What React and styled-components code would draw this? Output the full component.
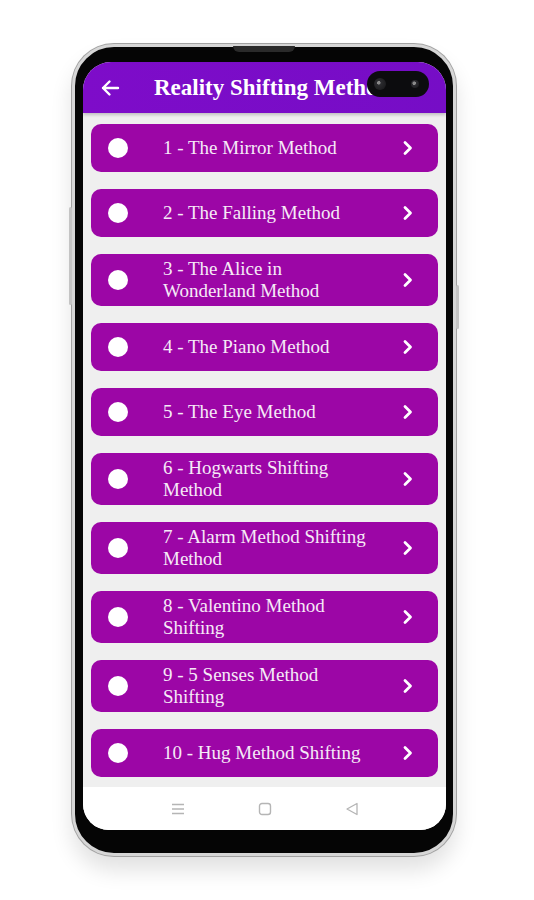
import styled, { createGlobalStyle } from 'styled-components';

const GlobalStyle = createGlobalStyle`
  html, body {
    margin: 0;
    padding: 0;
    background: #ffffff;
  }
  * {
    box-sizing: border-box;
  }
`;

const methods = [
  '1 - The Mirror Method',
  '2 - The Falling Method',
  '3 - The Alice in Wonderland Method',
  '4 - The Piano Method',
  '5 - The Eye Method',
  '6 - Hogwarts Shifting Method',
  '7 - Alarm Method Shifting Method',
  '8 - Valentino Method Shifting',
  '9 - 5 Senses Method Shifting',
  '10 - Hug Method Shifting',
];

const App = () => {
  return (
    <>
      <GlobalStyle />
      <Page>
        <Phone>
          <SideButton $side="left" $top={160} $height={98} />
          <SideButton $side="right" $top={238} $height={44} />
          <Speaker />
          <Camera>
            <Lens />
            <Lens $small />
          </Camera>
          <Screen>
            <AppBar>
              <BackButton>
                <svg width="20" height="18" viewBox="0 0 20 18">
                  <path
                    d="M18 9H3M9.5 2.5L3 9l6.5 6.5"
                    fill="none"
                    stroke="#fff"
                    strokeWidth="2.4"
                    strokeLinecap="round"
                    strokeLinejoin="round"
                  />
                </svg>
              </BackButton>
              <Title>Reality Shifting Methods</Title>
            </AppBar>
            <List>
              {methods.map((m) => (
                <Card key={m}>
                  <Dot />
                  <CardText>{m}</CardText>
                  <Chevron>
                    <svg width="12" height="16" viewBox="0 0 12 16">
                      <path
                        d="M3 2.5L8.5 8 3 13.5"
                        fill="none"
                        stroke="#fff"
                        strokeWidth="2.8"
                        strokeLinecap="round"
                        strokeLinejoin="round"
                      />
                    </svg>
                  </Chevron>
                </Card>
              ))}
            </List>
            <NavBar>
              <svg width="14" height="14" viewBox="0 0 14 14">
                <path d="M1 2.5h12M1 7h12M1 11.5h12" stroke="#b5b5b5" strokeWidth="1.4" />
              </svg>
              <svg width="14" height="14" viewBox="0 0 14 14">
                <rect x="1.5" y="1.5" width="11" height="11" rx="2.5" fill="none" stroke="#b5b5b5" strokeWidth="1.4" />
              </svg>
              <svg width="14" height="14" viewBox="0 0 14 14">
                <path d="M12 1.5v11L2 7z" fill="none" stroke="#b5b5b5" strokeWidth="1.3" strokeLinejoin="round" />
              </svg>
            </NavBar>
          </Screen>
        </Phone>
      </Page>
    </>
  );
};

export default App;

const Page = styled.div`
  width: 534px;
  height: 900px;
  padding: 44px 0 0 72px;
`;

const Phone = styled.div`
  position: relative;
  width: 384px;
  height: 812px;
  border-radius: 42px;
  background: #050505;
  border: 3px solid #d6d6d6;
  box-shadow: 0 0 0 1px #a2a2a2, 0 14px 22px rgba(0, 0, 0, 0.12);
  padding: 15px 7px 23px 8px;
`;

const SideButton = styled.div`
  position: absolute;
  top: ${(p) => p.$top}px;
  ${(p) => (p.$side === 'left' ? 'left: -6px;' : 'right: -6px;')}
  width: 3px;
  height: ${(p) => p.$height}px;
  background: #c4c4c4;
  border-radius: 2px;
`;

const Speaker = styled.div`
  position: absolute;
  top: -1px;
  left: 50%;
  transform: translateX(-50%);
  width: 62px;
  height: 6px;
  border-radius: 0 0 6px 6px;
  background: #2a2a2a;
`;

const Camera = styled.div`
  position: absolute;
  top: 24px;
  right: 24px;
  width: 62px;
  height: 26px;
  border-radius: 13px;
  background: #0c0c0e;
  display: flex;
  align-items: center;
  justify-content: space-between;
  padding: 0 10px 0 7px;
  z-index: 2;
`;

const Lens = styled.div`
  width: ${(p) => (p.$small ? 8 : 12)}px;
  height: ${(p) => (p.$small ? 8 : 12)}px;
  border-radius: 50%;
  background: radial-gradient(circle at 40% 40%, #8a8a8a 0 1.5px, #2c2c30 2px, #151517 100%);
`;

const Screen = styled.div`
  width: 100%;
  height: 100%;
  border-radius: 28px 28px 26px 26px;
  overflow: hidden;
  background: #ffffff;
  display: flex;
  flex-direction: column;
`;

const AppBar = styled.div`
  height: 51px;
  flex-shrink: 0;
  background: linear-gradient(90deg, #7e0cc9, #760dc6);
  display: flex;
  align-items: center;
  padding-left: 17px;
  box-shadow: 0 2px 3px rgba(0, 0, 0, 0.2);
  position: relative;
  z-index: 1;
`;

const BackButton = styled.div`
  width: 20px;
  height: 18px;
  display: flex;
  margin-right: 34px;
`;

const Title = styled.div`
  font-family: 'Liberation Serif', serif;
  font-weight: bold;
  font-size: 23px;
  color: #ffffff;
  white-space: nowrap;
`;

const List = styled.div`
  flex: 1;
  background: #efefef;
  padding: 11px 8px 0 8px;
  display: flex;
  flex-direction: column;
  gap: 17px;
`;

const Card = styled.div`
  min-height: 48px;
  border-radius: 10px;
  background: #9c06a6;
  display: flex;
  align-items: center;
  padding: 4px 24px 4px 17px;
`;

const Dot = styled.div`
  width: 20px;
  height: 20px;
  border-radius: 50%;
  background: #ffffff;
  flex-shrink: 0;
  margin-right: 35px;
`;

const CardText = styled.div`
  flex: 1;
  font-family: 'Liberation Serif', serif;
  font-size: 19px;
  line-height: 22px;
  color: #f6eaf7;
  padding-right: 30px;
`;

const Chevron = styled.div`
  width: 12px;
  height: 16px;
  display: flex;
  flex-shrink: 0;
`;

const NavBar = styled.div`
  height: 43px;
  flex-shrink: 0;
  background: #ffffff;
  display: flex;
  align-items: center;
  justify-content: center;
  gap: 73px;
`;
